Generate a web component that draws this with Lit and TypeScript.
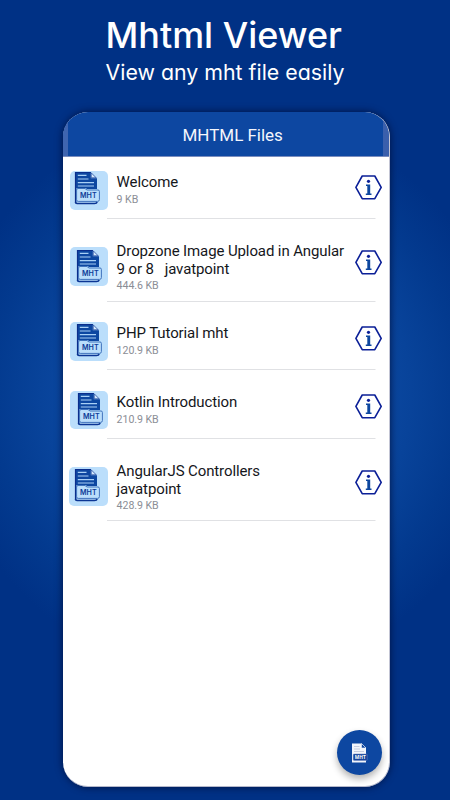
import { LitElement, html, css, svg } from "lit";
import { customElement, property } from "lit/decorators.js";
import { classMap } from "lit/directives/class-map.js";

interface MhtFile {
  lines: string[];
  size: string;
  kind: string;
}

const FILES: MhtFile[] = [
  { lines: ["Welcome"], size: "9 KB", kind: "first" },
  { lines: ["Dropzone Image Upload in Angular", "9 or 8   javatpoint"], size: "444.6 KB", kind: "double" },
  { lines: ["PHP Tutorial mht"], size: "120.9 KB", kind: "single" },
  { lines: ["Kotlin Introduction"], size: "210.9 KB", kind: "shifted" },
  { lines: ["AngularJS Controllers", "javatpoint"], size: "428.9 KB", kind: "last" },
];

@customElement("mht-icon")
export class MhtIcon extends LitElement {
  static styles = css`
    :host { display: block; width: 26px; height: 33px; }
    svg { display: block; }
    text { font-family: Inter, "Noto Sans", sans-serif; font-weight: 600; }
  `;
  render() {
    return html`<svg width="26" height="33" viewBox="0 0 26 33">
      ${svg`
      <path d="M1 0H16.8V6.2H23V17H13L11.6 16H2.5V31H1Z" fill="#0d47a1"/>
      <path d="M1.5 .5H16.8" stroke="#0b2e8c" stroke-width="1"/>
      <path d="M1.5 0V31" stroke="#0b2e8c" stroke-width="1.2"/>
      <path d="M17.2 .8V5.8H22.2Z" fill="#d7ebfc" stroke="#0b3594" stroke-width=".7"/>
      <path d="M3.8 3.4H12.5M3.8 7H14.5M3.8 10.6H20M3.8 14H20" stroke="#a9d0f5" stroke-width="1.1"/>
      <path d="M2.6 18Q2.6 16.5 4 16.5H11L13 18H24Q25.4 18 25.4 19.4V27.6Q25.4 29.4 23.6 29.4H4.2Q2.6 29.4 2.6 27.8Z" fill="#bbdefb" stroke="#4174bd" stroke-width="1"/>
      <path d="M1.4 30.3Q1.6 31.4 3 31.4H20.5Q22.8 31.4 23.2 30" fill="none" stroke="#0b3594" stroke-width="1.5"/>
      <text x="14.3" y="26.3" font-size="7.4" text-anchor="middle" textLength="16.6" lengthAdjust="spacingAndGlyphs" fill="#0d3c98">MHT</text>`}
    </svg>`;
  }
}

@customElement("file-row")
export class FileRow extends LitElement {
  @property({ attribute: false }) file!: MhtFile;
  static styles = css`
    :host { display: block; }
    .row {
      box-sizing: border-box; height: 68.5px; display: grid;
      grid-template-columns: 38px 239px 27px;
      align-items: start; padding-left: 7px;
      background: linear-gradient(#e0e1e4, #e0e1e4) 43.5px 100% / 268.5px 1.3px no-repeat;
    }
    .tile {
      width: 38px; height: 38.5px; border-radius: 5px; background: #bbdefb;
      box-sizing: border-box; padding: 2px 0 0 5.5px; margin-top: 20px;
    }
    .text { padding: 22.3px 0 0 8.6px; }
    .name {
      font: 400 15px/18px Roboto, sans-serif; color: #15171c;
      white-space: pre; letter-spacing: -.11px;
    }
    .size { font: 400 10.6px/13px Roboto, sans-serif; color: #8b8e96; margin-top: 2px; letter-spacing: -.06px; }
    .info { margin: 23.7px 0 0 8px; display: block; }
    .first { height: 62px; }
    .first .tile { margin-top: 14px; padding: 1px 0 0 4px; }
    .first .text { padding-top: 16px; }
    .first .info { margin-top: 18px; }
    .double { height: 83px; }
    .double .tile { margin-top: 28px; padding-top: 3px; }
    .double .text { padding-top: 22.5px; }
    .double .info { margin-top: 31.3px; }
    .double .size, .last .size { margin-top: 1px; }
    .shifted .tile { padding: 2px 0 0 6.5px; }
    .last { height: 82px; }
    .last .tile { width: 39.5px; margin: 28px 0 0 -1.5px; padding-left: 5.5px; }
    .last .text { padding-top: 22.5px; }
    .last .info { margin-top: 30.8px; }
  `;
  render() {
    const f = this.file;
    return html`<div class=${classMap({ row: true, [f.kind]: true })}>
      <div class="tile"><mht-icon></mht-icon></div>
      <div class="text">
        ${f.lines.map((l) => html`<div class="name">${l}</div>`)}
        <div class="size">${f.size}</div>
      </div>
      <svg class="info" width="27" height="25" viewBox="0 0 27 25">
        <path d="M7.2 1H19.8L26.2 12.4L19.8 23.7H7.2L.9 12.4Z" fill="none" stroke="#0b1f97" stroke-width="1.6" stroke-linejoin="round"/>
        <circle cx="13.5" cy="6.3" r="1.6" fill="#0b1f97"/>
        <path d="M11 9.4H15.2V18.5H16.5V19.9H10.8V18.5H12.3V10.9H11Z" fill="#0d479f"/>
      </svg>
    </div>`;
  }
}

@customElement("app-root")
export class AppRoot extends LitElement {
  static styles = css`
    :host {
      display: flex; flex-direction: column; box-sizing: border-box;
      width: 450px; height: 800px; overflow: hidden; padding: 15px 0 0 0;
      background: radial-gradient(circle 285px at 226px 395px, #0d4aa4 0, #0c49a2 50%, #08439a 65%, #033a8f 82%, #003185 100%), #003185;
    }
    .title { height: 42px; text-align: center; white-space: nowrap; }
    .subtitle { height: 55px; }
    .headline { display: block; margin: 0 auto; overflow: visible; fill: #fff; }
    .big { font: 500 35.5px Inter, sans-serif; font-feature-settings: "cv11"; }
    .small { font: 400 21px Inter, sans-serif; font-feature-settings: "cv11"; }
    .panel {
      position: relative; box-sizing: border-box; width: 327.3px; height: 674.5px;
      border-radius: 25px; background: #fff; overflow: hidden;
      border-right: 1px solid #c3c5d4; border-bottom: 1.5px solid #b4b8cb;
    }
    .shadow { border-radius: 26px; box-shadow: 0 0 7px 1px rgba(0, 16, 60, .75); width: 327px; margin-left: 63px; }
    .bar {
      height: 45px; box-sizing: border-box; border-bottom: 1px solid #7a8dbe;
      display: flex; align-items: center; justify-content: center; padding: 2px 0 0 13px;
      background:
        linear-gradient(#3f65b0, #3f65b0) 0 0 / 5px 100% no-repeat,
        linear-gradient(#3a5fac, #3a5fac) 100% 0 / 6px 100% no-repeat, #0d47a1;
      font: 400 17px/20px Roboto, sans-serif; color: #f4f6fc; letter-spacing: -.03px;
    }
    .fab {
      position: absolute; right: 7px; bottom: 10.5px; width: 45px; height: 45px; border-radius: 50%;
      background: #0d47a1; display: flex; align-items: center; justify-content: center;
      box-shadow: 0 4px 7px rgba(0, 0, 0, .3);
    }
    .badge { font: 700 5.5px "Open Sans", sans-serif; }
  `;
  render() {
    return html`
      <div class="title">
        <svg class="headline" width="240" height="42"><text class="big" x="0.5" y="33" textLength="236.5" lengthAdjust="spacingAndGlyphs">Mhtml Viewer</text></svg>
      </div>
      <div class="subtitle">
        <svg class="headline" width="240" height="30"><text class="small" x="0.5" y="22.5" textLength="239" lengthAdjust="spacingAndGlyphs">View any mht file easily</text></svg>
      </div>
      <div class="shadow">
        <div class="panel">
          <div class="bar">MHTML Files</div>
          ${FILES.map((f) => html`<file-row .file=${f}></file-row>`)}
          <div class="fab">
            <svg width="17" height="20" viewBox="0 0 17 20">
              <path d="M1 .5H10.5L15 5V19.5H1Z" fill="#f2f5fb"/>
              <path d="M10.5 .5V5H15Z" fill="#0d47a1" stroke="#f2f5fb" stroke-width=".6"/>
              <path d="M3 3.5H8.5M3 6H9M3 8.5H13" stroke="#b9c2d8" stroke-width=".8"/>
              <rect x="2.2" y="11" width="14" height="6.4" rx=".8" fill="#123f98" stroke="#6f8ac2" stroke-width=".5"/>
              <text class="badge" x="9.2" y="16.2" text-anchor="middle" textLength="11" lengthAdjust="spacingAndGlyphs" fill="#fff">MHT</text>
            </svg>
          </div>
        </div>
      </div>
    `;
  }
}
